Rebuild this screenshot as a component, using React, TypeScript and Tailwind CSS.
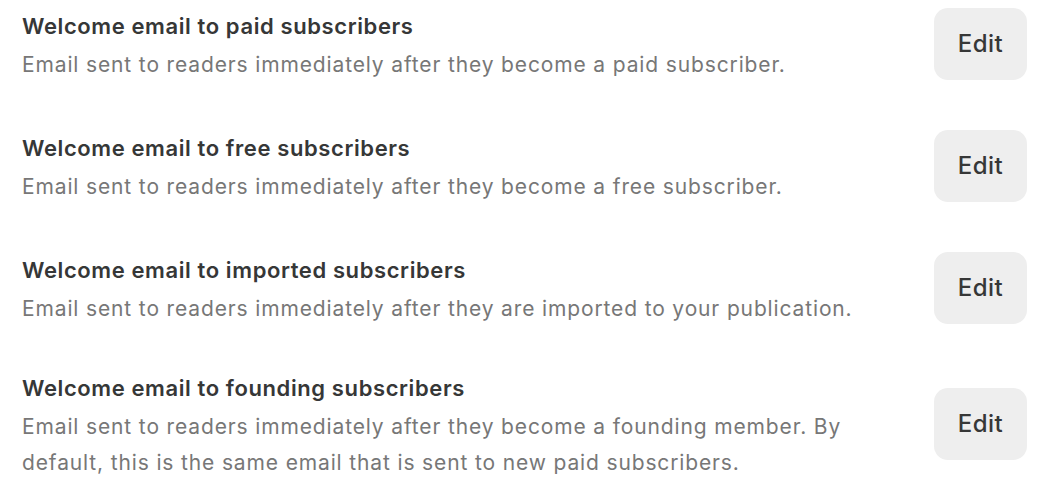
const rows = [
  {
    title: 'Welcome email to paid subscribers',
    desc: 'Email sent to readers immediately after they become a paid subscriber.',
  },
  {
    title: 'Welcome email to free subscribers',
    desc: 'Email sent to readers immediately after they become a free subscriber.',
  },
  {
    title: 'Welcome email to imported subscribers',
    desc: 'Email sent to readers immediately after they are imported to your publication.',
  },
  {
    title: 'Welcome email to founding subscribers',
    desc: 'Email sent to readers immediately after they become a founding member. By default, this is the same email that is sent to new paid subscribers.',
  },
];

export default function App() {
  return (
    <div className="min-h-screen bg-white pl-[22px] pr-[19px] pt-2 font-['Inter',sans-serif]">
      <div className="flex flex-col gap-[43px]">
        {rows.map((row) => (
          <div key={row.title} className="flex items-center justify-between">
            <div className="w-[880px]">
              <h3 className="text-[22px] font-semibold leading-[28px] tracking-[0.6px] text-[#363737]">
                {row.title}
              </h3>
              <p className="mt-[7px] text-[21px] leading-[36px] tracking-[0.86px] text-[#777777]">{row.desc}</p>
            </div>
            <button className="mb-[7px] h-[72px] w-[93px] rounded-[14px] bg-[#eeeeee] text-[24px] font-medium tracking-[0.5px] text-[#363737]">
              Edit
            </button>
          </div>
        ))}
      </div>
    </div>
  );
}
